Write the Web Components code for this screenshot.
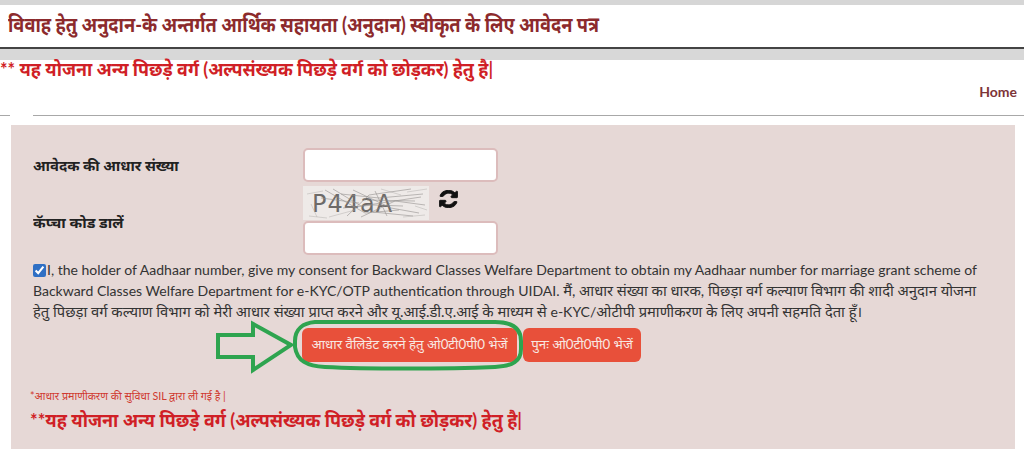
<!DOCTYPE html>
<html lang="hi">
<head>
<meta charset="utf-8">
<title>आवेदन पत्र</title>
<style>
html, body { margin: 0; height: 449px; overflow: hidden; background: #fff; }
body { font-family: Lato, "Noto Sans", sans-serif; }
</style>
</head>
<body>
<title-bar>विवाह हेतु अनुदान-के अन्तर्गत आर्थिक सहायता (अनुदान) स्वीकृत के लिए आवेदन पत्र</title-bar>
<notice-line>** यह योजना अन्य पिछड़े वर्ग (अल्पसंख्यक पिछड़े वर्ग को छोड़कर) हेतु है|</notice-line>
<home-nav>Home</home-nav>
<form-panel>
  <field-row slot="fields" label="आवेदक की आधार संख्या" style="--label-scale:1.02"></field-row>
  <captcha-row slot="fields" label="कॅप्चा कोड डालें" style="--label-scale:1.05"></captcha-row>
  <consent-box slot="consent">I, the holder of Aadhaar number, give my consent for Backward Classes Welfare Department to obtain my Aadhaar number for marriage grant scheme of Backward Classes Welfare Department for e-KYC/OTP authentication through UIDAI. <span style="font-size:14.75px">मैं, आधार संख्या का धारक, पिछड़ा वर्ग कल्याण विभाग की शादी अनुदान योजना हेतु पिछड़ा वर्ग कल्याण विभाग को मेरी आधार संख्या प्राप्त करने और यू.आई.डी.ए.आई के माध्यम से </span>e-KYC/<span style="font-size:14.75px">ओटीपी प्रमाणीकरण के लिए अपनी सहमति देता हूँ।</span></consent-box>
  <action-button slot="actions" marked style="width:215px">आधार वैलिडेट करने हेतु ओ0टी0पी0 भेजें</action-button>
  <action-button slot="actions" style="width:118px">पुनः ओ0टी0पी0 भेजें</action-button>
  <span slot="note">*आधार प्रमाणीकरण की सुविधा SIL द्वारा ली गई है |</span>
  <span slot="notice">**यह योजना अन्य पिछड़े वर्ग (अल्पसंख्यक पिछड़े वर्ग को छोड़कर) हेतु है|</span>
</form-panel>

<script>
function define(name, html) {
  customElements.define(name, class extends HTMLElement {
    constructor() {
      super();
      this.attachShadow({ mode: "open" }).innerHTML = html;
    }
    connectedCallback() {
      const label = this.shadowRoot.querySelector(".label");
      if (label) label.textContent = this.getAttribute("label");
    }
  });
}

// the reference's Devanagari face is narrower than the installed one
const squeezeCss = `.squeeze { display: inline-block; transform-origin: left center; }`;

define("title-bar", `<style>
:host { display: block; }
${squeezeCss}
.band { height: 5px; background: #d6d6d6; }
.bar { height: 42px; box-sizing: border-box; padding: 4px 0 0 8px; font-size: 20.5px; font-weight: 700; color: #8c2a2c; line-height: 30px; white-space: nowrap; }
.squeeze { transform: scaleX(.89); }
.rule { height: 2px; background: #444; }
.shadow { height: 11px; background: #d8d8d8; }
</style>
<div class="band"></div>
<div class="bar"><span class="squeeze"><slot></slot></span></div>
<div class="rule"></div>
<div class="shadow"></div>`);

define("notice-line", `<style>
:host { display: block; height: 20px; font-size: 18.5px; font-weight: 700; color: #d01f26; line-height: 18px; white-space: nowrap; }
${squeezeCss}
.squeeze { transform: scaleX(.965); }
</style><span class="squeeze"><slot></slot></span>`);

define("home-nav", `<style>
:host { display: block; height: 45px; box-sizing: border-box; position: relative; text-align: right; padding: 2px 7px 0 0; font-size: 14px; font-weight: 700; color: #7d3438; line-height: 20px; }
.rule { display: flex; gap: 23px; position: absolute; left: 0; right: 0; bottom: 9px; }
.rule i { height: 1px; background: #a8a8a8; }
.rule i:first-child { width: 10px; }
.rule i:last-child { flex: 1; }
</style><slot></slot><div class="rule"><i></i><i></i></div>`);

define("form-panel", `<style>
:host { display: block; margin: 0 9px 0 11px; height: 324px; box-sizing: border-box; background: #e6d8d6; padding: 23px 22px 0; }
${squeezeCss}
.fields { display: flex; flex-direction: column; }
.consent { margin-top: 4px; }
.actions { display: flex; gap: 6px; margin: 6px 0 0 269px; }
.note { margin: 27px 0 0 -3px; font-size: 10.7px; line-height: 14px; color: #d0392f; }
.notice { margin: 3px 0 0 -3px; font-size: 19px; line-height: 28px; font-weight: 700; color: #d01f26; white-space: nowrap; }
.notice .squeeze { transform: scaleX(.946); }
</style>
<div class="fields"><slot name="fields"></slot></div>
<div class="consent"><slot name="consent"></slot></div>
<div class="actions"><slot name="actions"></slot></div>
<div class="note"><slot name="note"></slot></div>
<div class="notice"><span class="squeeze"><slot name="notice"></slot></span></div>`);

const inputCss = `
.grid { display: grid; grid-template-columns: 270px 195px; align-items: center; }
.label { font-size: 14.5px; font-weight: 700; color: #222; white-space: nowrap; transform: scaleX(var(--label-scale, 1)); transform-origin: left center; }
.input { display: block; box-sizing: border-box; width: 195px; height: 34px; background: #fff; border: 2px solid #dcbcbc; border-radius: 5px; padding: 0 8px; margin: 0; outline: none; }
`;

define("field-row", `<style>
:host { display: block; }
${inputCss}
</style>
<div class="grid"><span class="label"></span><input class="input" type="text"></div>`);

define("captcha-row", `<style>
:host { display: block; margin-top: 4px; }
${inputCss}
.grid { align-items: end; }
.label { padding-bottom: 23px; }
.stack { display: flex; flex-direction: column; gap: 1px; }
.top { display: flex; gap: 10px; align-items: flex-start; height: 34px; }
.captcha { display: block; width: 126px; height: 34px; }
.captcha text { font: 24px "DejaVu Sans", sans-serif; fill: #6d6a68; letter-spacing: 1px; }
.refresh { display: block; width: 19px; height: 18px; margin-top: 4px; }
</style>
<div class="grid">
  <span class="label"></span>
  <div class="stack">
    <div class="top">
      <svg class="captcha" viewBox="0 0 126 34">
        <rect width="126" height="34" fill="#eeeae8"/>
        <text x="9" y="26">P44aA</text>
        <g stroke="#8d8a88" stroke-width=".7" fill="none" opacity=".8">
          <path d="M22 4 62 27 96 24M30 3 58 20 118 11M38 8 76 12 120 8M44 30 66 9 108 3M50 4 88 22 116 27M58 31 92 15 122 19M72 5 84 30M64 14 112 15M18 12 56 17M70 26 110 30M40 22 70 19 100 20"/>
        </g>
        <g stroke="#a9a6a4" stroke-width=".6" fill="none" opacity=".7">
          <path d="M4 8 20 5M6 30 24 32M100 31 122 29M104 6 124 3M8 18 14 31M112 20 124 24M26 31 52 24M78 3 98 9"/>
        </g>
      </svg>
      <svg class="refresh" viewBox="0 0 512 512" fill="#111" stroke="#111" stroke-width="26" preserveAspectRatio="none">
        <path d="M370 133a160 160 0 0 0-250 36 24 24 0 0 1-22 15H40a12 12 0 0 1-12-14C52 70 145 8 256 8c67 0 128 27 172 71l36-36c15-15 40-4 40 17v134c0 13-11 24-24 24H346c-21 0-32-26-17-41z"/>
        <path d="M142 379a160 160 0 0 0 250-36 24 24 0 0 1 22-15h58a12 12 0 0 1 12 14c-24 100-117 162-228 162-67 0-128-27-172-71l-36 36c-15 15-40 4-40-17V318c0-13 11-24 24-24h134c21 0 32 26 17 41z"/>
      </svg>
    </div>
    <input class="input" type="text">
  </div>
</div>`);

define("consent-box", `<style>
:host { display: block; font-size: 14.03px; line-height: 21px; color: #333; width: 960px; }
input { width: 13px; height: 13px; margin: 0 1px 0 0; vertical-align: -2px; accent-color: #2f6fc4; }
</style>
<input type="checkbox" checked><slot></slot>`);

define("action-button", `<style>
:host { display: block; position: relative; height: 34px; box-sizing: border-box; background: #e8503a; border-radius: 6px; color: #f8e8e2; font-size: 13.3px; font-weight: 400; line-height: 33px; text-align: center; white-space: nowrap; }
.mark { display: none; position: absolute; left: -87px; top: -7px; width: 310px; height: 52px; overflow: visible; pointer-events: none; }
:host([marked]) .mark { display: block; }
</style>
<slot></slot>
<svg class="mark" viewBox="0 0 310 52" fill="none" stroke="#2ea44f" stroke-width="4">
  <path d="M3 14H38V3L76 24 38 49V36H3Z"/>
  <path d="M100 1H280C298 1 306 8 306 20V28C306 40 298 45 280 46 230 48 150 48 110 46 92 45 82 40 80 26V20C80 8 88 2 100 1Z"/>
</svg>`);
</script>
</body>
</html>
